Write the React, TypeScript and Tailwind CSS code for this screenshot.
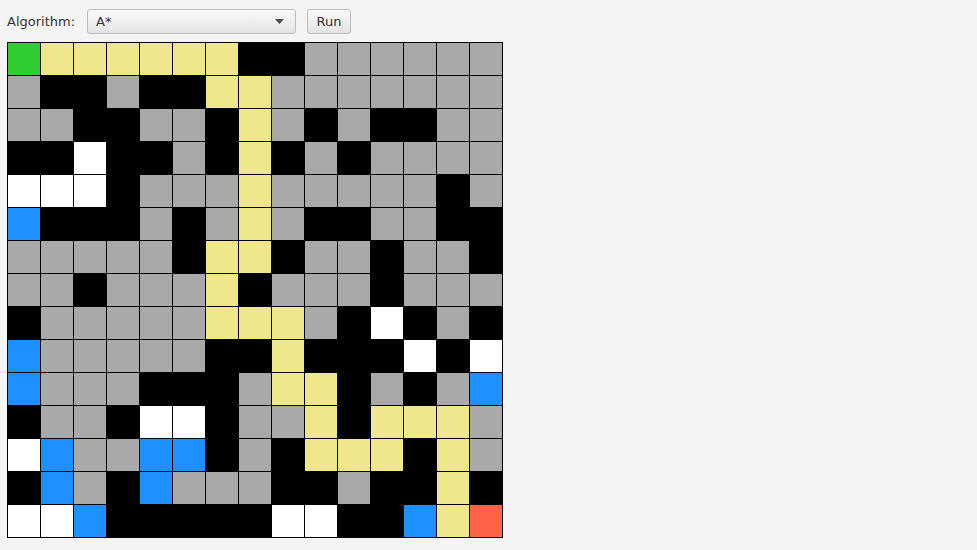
const COLORS: Record<string, string> = {
  G: "bg-[#32cd32]",
  Y: "bg-[#f0e68c]",
  B: "bg-black",
  g: "bg-[#a9a9a9]",
  W: "bg-white",
  L: "bg-[#1e90ff]",
  R: "bg-[#ff6347]",
};

// one string per row, one letter per cell
const GRID = [
  "GYYYYYYBBgggggg",
  "gBBgBBYYggggggg",
  "ggBBggBYgBgBBgg",
  "BBWBBgBYBgBgggg",
  "WWWBgggYgggggBg",
  "LBBBgBgYgBBggBB",
  "gggggBYYBggBggB",
  "ggBgggYBgggBggg",
  "BgggggYYYgBWBgB",
  "LgggggBBYBBBWBW",
  "LgggBBBgYYBgBgL",
  "BggBWWBggYBYYYg",
  "WLggLLBgBYYYBYg",
  "BLgBLgggBBgBBYB",
  "WWLBBBBBWWBBLYR",
];

const Toolbar = () => (
  <div className="flex items-center h-[25px]">
    <span className="text-[13px] text-[#333333] mr-[12px]">Algorithm:</span>
    <div className="w-[209px] h-[25px] flex items-center justify-between px-[8px] border border-[#bdbdbd] rounded-[3px] bg-gradient-to-b from-[#fbfbfb] to-[#e3e3e3]">
      <span className="text-[13px] text-[#333333]">A*</span>
      <svg width="9" height="5" viewBox="0 0 9 5" className="mr-[3px]">
        <polygon points="0,0 9,0 4.5,5" fill="#4a4a4a" />
      </svg>
    </div>
    <button className="ml-[11px] w-[44px] h-[25px] text-[13px] text-[#333333] border border-[#bdbdbd] rounded-[3px] bg-gradient-to-b from-[#fbfbfb] to-[#e3e3e3]">
      Run
    </button>
  </div>
);

const Grid = () => (
  <div className="grid grid-cols-[repeat(15,32px)] gap-px p-px bg-black w-[496px]">
    {GRID.flatMap((row, r) =>
      row.split("").map((c, i) => (
        <div key={`${r}-${i}`} className={`h-[32px] ${COLORS[c]}`} />
      ))
    )}
  </div>
);

export default function App() {
  return (
    <div
      className="w-[977px] h-[550px] bg-[#f4f4f4] pl-[7px] pt-[9px]"
      style={{ fontFamily: '"DejaVu Sans", sans-serif' }}
    >
      <Toolbar />
      <div className="mt-[8px]">
        <Grid />
      </div>
    </div>
  );
}
